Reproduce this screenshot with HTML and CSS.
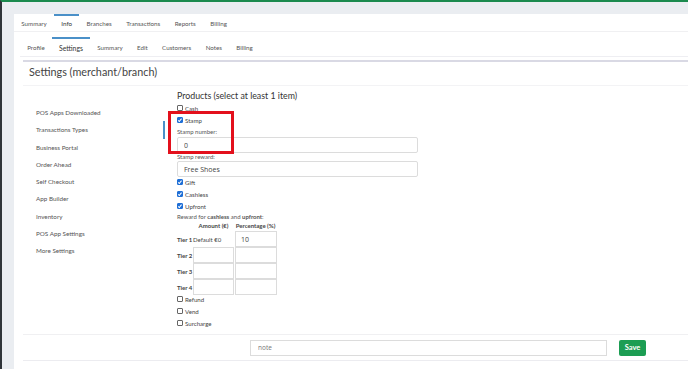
FILE: index.html
```html
<!DOCTYPE html>
<html>
<head>
<meta charset="utf-8">
<link rel="stylesheet" href="styles.css">
</head>
<body>
<div class="frame">
  <div class="panel">
    <nav class="tabs top-tabs">
      <a>Summary</a><a class="active">Info</a><a>Branches</a><a>Transactions</a><a>Reports</a><a>Billing</a>
    </nav>
    <nav class="tabs sub-tabs">
      <a>Profile</a><a class="active">Settings</a><a>Summary</a><a>Edit</a><a>Customers</a><a>Notes</a><a>Billing</a>
    </nav>
    <section class="card">
      <h1 class="card-title">Settings (merchant/branch)</h1>
      <div class="card-body">
        <ul class="side-nav">
          <li>POS Apps Downloaded</li>
          <li class="active">Transactions Types</li>
          <li>Business Portal</li>
          <li>Order Ahead</li>
          <li>Self Checkout</li>
          <li>App Builder</li>
          <li>Inventory</li>
          <li>POS App Settings</li>
          <li>More Settings</li>
        </ul>
        <form class="products">
          <h2 class="products-title">Products (select at least 1 item)</h2>
          <label class="check"><input type="checkbox">Cash</label>
          <label class="check"><input type="checkbox" checked>Stamp</label>
          <label class="field-label">Stamp number:</label>
          <input class="text-input" type="text" value="0">
          <label class="field-label tight">Stamp reward:</label>
          <input class="text-input last" type="text" value="Free Shoes">
          <label class="check"><input type="checkbox" checked>Gift</label>
          <label class="check"><input type="checkbox" checked>Cashless</label>
          <label class="check"><input type="checkbox" checked>Upfront</label>
          <p class="reward-label">Reward for <b>cashless</b> and <b>upfront</b>:</p>
          <table class="tiers">
            <tr class="head"><th></th><th>Amount (€)</th><th>Percentage (%)</th></tr>
            <tr><th>Tier 1</th><td class="plain">Default €0</td><td><input class="cell-input" value="10"></td></tr>
            <tr><th>Tier 2</th><td><input class="cell-input"></td><td><input class="cell-input"></td></tr>
            <tr><th>Tier 3</th><td><input class="cell-input"></td><td><input class="cell-input"></td></tr>
            <tr><th>Tier 4</th><td><input class="cell-input"></td><td><input class="cell-input"></td></tr>
          </table>
          <label class="check"><input type="checkbox">Refund</label>
          <label class="check"><input type="checkbox">Vend</label>
          <label class="check"><input type="checkbox">Surcharge</label>
          <div class="highlight"></div>
        </form>
      </div>
      <div class="card-footer">
        <input class="note-input" type="text" placeholder="note">
        <button class="save-btn" type="button">Save</button>
      </div>
    </section>
  </div>
</div>
</body>
</html>
```

FILE: styles.css
```css
html, body {
  margin: 0;
  padding: 0;
  height: 100%;
}
body {
  font-family: "Lato", "Open Sans", sans-serif;
  color: #555;
  background: #eaedf1;
  overflow: hidden;
}
.frame {
  border-top: 2px solid #1b8a4e;
  border-left: 2px solid #2f3439;
  height: 100%;
  box-sizing: border-box;
  padding: 12px 0 0 12px;
}
.panel {
  background: #fff;
  height: 100%;
}
.tabs {
  display: flex;
}
.tabs a {
  font-size: 6.2px;
  color: #555;
  padding: 0 7.3px;
  display: flex;
  align-items: center;
  border-top: 2px solid transparent;
}
.top-tabs {
  height: 17px;
  border-bottom: 1px solid #f0f0f2;
}
.top-tabs a {
  height: 15px;
}
.top-tabs a.active, .sub-tabs a.active {
  border-top-color: #4a90c8;
  color: #333;
}
.sub-tabs a.active {
  font-size: 6.8px;
}
.sub-tabs {
  margin: 5px 0 0 6px;
  height: 19px;
  border-bottom: 1px solid #eeeef2;
}
.sub-tabs a {
  height: 17px;
  padding: 0 7.2px;
}
.card {
  margin: 3px 0 0 9px;
  border-top: 2px solid #d9d9e4;
}
.card-title {
  margin: 0;
  font-weight: 400;
  font-size: 10.8px;
  color: #444;
  height: 23px;
  line-height: 19px;
  padding-left: 6px;
  border-bottom: 1px solid #f3f3f5;
}
.card-body {
  display: flex;
  height: 248px;
  border-bottom: 1px solid #f0f0f2;
}
.side-nav {
  list-style: none;
  margin: 18px 0 0 0;
  padding: 0;
  width: 142px;
}
.side-nav li {
  font-size: 6.3px;
  color: #555;
  height: 17.3px;
  line-height: 17.3px;
  padding-left: 13px;
  box-sizing: border-box;
}
.side-nav li.active {
  border-right: 2px solid #4a90c8;
}
.products {
  position: relative;
  margin-left: 12px;
  display: flex;
  flex-direction: column;
  align-items: flex-start;
  width: 242px;
}
.products-title {
  margin: 4px 0 0;
  font-weight: 400;
  font-size: 8.8px;
  color: #333;
  line-height: 12px;
}
.check {
  display: flex;
  align-items: center;
  font-size: 6.1px;
  color: #444;
  height: 12px;
}
.check input {
  -webkit-appearance: none;
  appearance: none;
  position: relative;
  box-sizing: border-box;
  width: 6px;
  height: 6px;
  margin: 0 2px 0 0;
  border: 1px solid #666;
  border-radius: 1px;
  background: #fff;
}
.check input:checked {
  background: #1f6fd6;
  border-color: #1f6fd6;
}
.check input:checked::after {
  content: "";
  position: absolute;
  left: 1px;
  top: 0px;
  width: 1.3px;
  height: 2.6px;
  border: solid #fff;
  border-width: 0 1px 1px 0;
  transform: rotate(40deg);
}
.field-label {
  font-size: 6px;
  color: #555;
  height: 8px;
  line-height: 8px;
  margin: 2px 0 1px;
}
.field-label.tight {
  margin: 0;
}
.text-input {
  width: 241px;
  height: 16px;
  box-sizing: border-box;
  border: 1px solid #dcdcdc;
  border-radius: 2px;
  padding: 0 6px;
  font-family: "Open Sans", sans-serif;
  font-size: 7px;
  color: #444;
  margin: 0;
  outline: none;
}
.text-input.last {
  margin-bottom: -1px;
}
.reward-label {
  margin: 1px 0 0;
  font-size: 6px;
  color: #555;
  height: 8px;
  line-height: 8px;
}
.reward-label b {
  font-weight: 700;
}
.tiers {
  border-collapse: collapse;
  font-size: 6px;
  color: #444;
  margin-bottom: -2px;
}
.tiers th, .tiers td {
  padding: 0;
}
.tiers tr.head th {
  font-weight: 700;
  height: 10px;
  line-height: 10px;
  text-align: center;
}
.tiers tr th:first-child {
  width: 16px;
  text-align: left;
  font-weight: 700;
  white-space: nowrap;
}
.tiers td {
  height: 16px;
}
.tiers td.plain {
  width: 40px;
  white-space: nowrap;
}
.cell-input {
  display: block;
  width: 41px;
  height: 16px;
  box-sizing: border-box;
  border: 1px solid #dcdcdc;
  padding: 0 5px;
  font-family: "Open Sans", sans-serif;
  font-size: 7px;
  color: #444;
  margin: 0;
  outline: none;
}
.tiers td + td .cell-input {
  width: 42px;
  margin-left: 1px;
}
.highlight {
  position: absolute;
  left: -9px;
  top: 25px;
  width: 60px;
  height: 37px;
  border: 3px solid #e3101c;
}
.card-footer {
  display: flex;
  align-items: center;
  gap: 12px;
  height: 25px;
  padding-left: 227px;
  border-bottom: 1px solid #ececf0;
}
.note-input {
  width: 357px;
  height: 16px;
  box-sizing: border-box;
  border: 1px solid #dcdcdc;
  padding: 0 7px;
  font-family: "Open Sans", sans-serif;
  font-size: 6.5px;
  outline: none;
}
.note-input::placeholder {
  color: #777;
}
.save-btn {
  background: #1c9d53;
  color: #fff;
  border: 0;
  border-radius: 2px;
  height: 16px;
  width: 27px;
  padding: 0;
  font-family: "Lato", sans-serif;
  font-weight: 700;
  font-size: 7.5px;
}
```
